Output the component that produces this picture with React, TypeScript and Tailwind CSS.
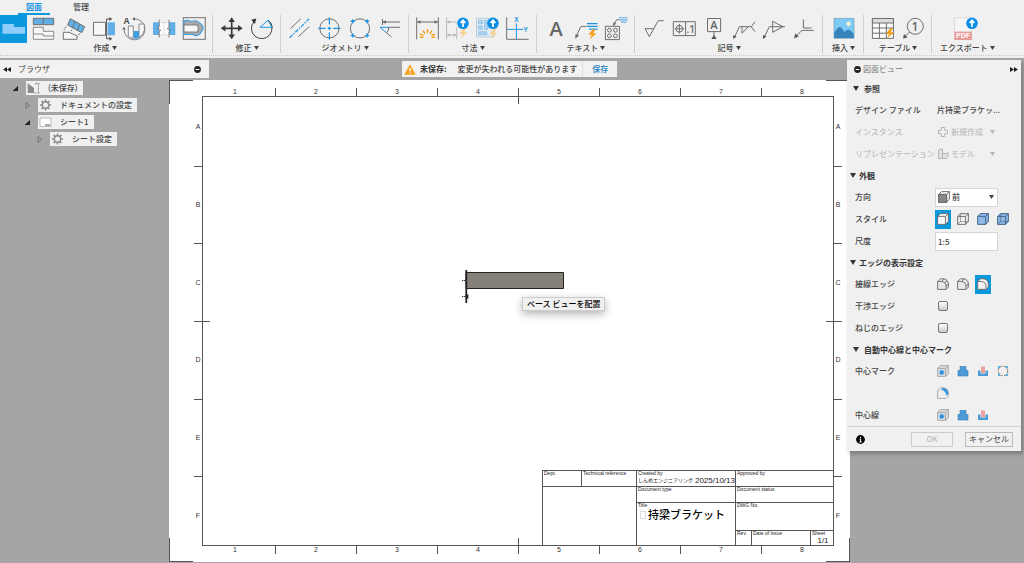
import { useState } from "react";
import type { ReactNode } from "react";
import { clsx } from "clsx";

type Tool = {
  name: string;
  icon: ReactNode;
  active?: boolean;
};

type ToolGroupData = {
  label: string;
  tools: Tool[];
};

const gray = "#6e6e6e";
const blue = "#1a94e0";
const sky = "#62aee6";
const orange = "#f7a11b";

function UploadBadge() {
  return (
    <>
      <circle cx="20" cy="8.3" fill="#0d8ee6" r="5.8" stroke="none" />
      <path d="M20 12V6M17.6 8L20 5.2L22.4 8" fill="none" stroke="#fff" strokeWidth="1.7" />
    </>
  );
}

function Bolt({ x, y, color = orange }: { x: number; y: number; color?: string }) {
  return <path d="M4 0L0 5.2H3.2L1 10L8 3.8H4.6L7 0Z" fill={color} stroke="none" transform={`translate(${x} ${y})`} />;
}

const groups: ToolGroupData[] = [
  {
    label: "作成",
    tools: [
      { name: "ベース ビュー", active: true, icon: <path d="M2.5 9H14V12H25V18.8H2.5Z" fill="#8fcdfb" stroke="none" /> },
      {
        name: "投影ビュー",
        icon: (
          <>
            <path d="M3.3 3.3H23.7V9.7H3.3ZM13.3 3.3V9.7" fill={sky} />
            <path d="M3.3 12.3H13.3V16.3H23.7V24.3H3.3ZM3.3 19H13.3V21H23.7" fill="#f7f7f7" stroke="#8a8a8a" />
          </>
        ),
      },
      {
        name: "補助ビュー",
        icon: (
          <>
            <path d="M10.3 3.7L24.7 11.7L21.7 17.7L7.7 10ZM15 6.5L12.6 12.6M20 9.3L17.3 15.2" fill={sky} />
            <path d="M6 11.5L4 15.3M12 14.5L10 17.3M19.5 18.5L17.5 21.5" strokeDasharray="2 1" />
            <path d="M3.3 17.3H9L17 21V24.3H3.3Z" fill="#fafafa" />
          </>
        ),
      },
      {
        name: "断面図",
        icon: (
          <>
            <path d="M3.5 7.3H15.5V20.3H3.5Z" fill="#f7f7f7" />
            <path d="M17.7 7.3H25V20.3H17.7Z" fill={sky} stroke="none" />
            <path d="M16.6 4V24M16.6 4H20M16.6 23.7H20" stroke="#555" />
            <path d="M19.3 2L22.3 4L19.3 6ZM19.3 21.7L22.3 23.7L19.3 25.7Z" fill="#555" stroke="none" />
          </>
        ),
      },
      {
        name: "詳細図",
        icon: (
          <>
            <path d="M13.5 3.9A10.5 10.5 0 1 1 4 14.5" stroke="#777" strokeWidth="0.9" />
            <path d="M12.2 3.9L15 2.3V5.5ZM4 11.8L2.4 14.6H5.6Z" fill="#555" stroke="none" />
            <path d="M8.3 11H13.3V23.4Q10.5 23 8.3 21Z" fill="#f7f7f7" strokeWidth="0.8" />
            <path d="M19 9H24.2L24.4 15Q23.5 20 19 22.5Z" fill="#f7f7f7" strokeWidth="0.8" />
            <path d="M13.6 16H19V22.8Q16.5 24 13.6 23.6Z" fill="#3d9ee2" stroke="none" />
            <text fill="#444" fontFamily="Liberation Sans" fontSize="8.5" fontWeight="700" stroke="none" x="3.5" y="9.4">A</text>
          </>
        ),
      },
      {
        name: "破断図",
        icon: (
          <>
            <path d="M3 7.3H9.2V20H3ZM19 7.3H25.3V20H19Z" fill={sky} stroke="none" />
            <path d="M9.2 7.3H19V20H9.2Z" fill="#fdfdfd" stroke="none" />
            <path d="M9.2 4.8V11.5L7.6 14L10.6 15L9.2 17V22.5M19 4.8V11.5L17.4 14L20.4 15L19 17V22.5" strokeWidth="0.9" />
            <path d="M9.5 7.5H19M9.5 19.8H19M14.1 7.5V20" stroke="#bbb" strokeDasharray="2 1" strokeWidth="0.6" />
          </>
        ),
      },
      {
        name: "部分断面図",
        icon: (
          <>
            <path d="M3.3 2.6H25.3V24.3H3.3Z" stroke="#8a8a8a" strokeWidth="1.3" />
            <path d="M4 6Q7 4.5 11 6.5Q17 4.5 19.5 8Q23.5 10 23 14.5Q21 17 20 19Q16 22 13 19.5H4Z" fill="#a9a9a9" stroke="#3d9ee2" strokeWidth="1.1" />
            <path d="M4 10H17.5Q19 13 17.5 17H4Z" fill="#f7f7f7" stroke="#777" strokeWidth="0.9" />
          </>
        ),
      },
    ],
  },
  {
    label: "修正",
    tools: [
      {
        name: "移動",
        icon: (
          <>
            <path d="M14.7 5V22M6 13.3H23" stroke="#3a3a3a" strokeWidth="1.7" />
            <path d="M14.7 2.3L18 7H11.4ZM14.7 24.3L18 19.6H11.4ZM3.7 13.3L8.4 10V16.6ZM25.7 13.3L21 10V16.6Z" fill="#3a3a3a" stroke="none" />
          </>
        ),
      },
      {
        name: "回転",
        icon: (
          <>
            <path d="M7 6.5A10.3 10.3 0 1 0 21 5.2Q25 8.5 25.3 12.5" stroke="#444" />
            <path d="M4.3 4.7L9.2 3.5L8 9Z" fill="#333" stroke="none" />
            <path d="M13 12.3L21 5.2L25 12.3Z" stroke={blue} />
          </>
        ),
      },
    ],
  },
  {
    label: "ジオメトリ",
    tools: [
      {
        name: "中心線",
        icon: (
          <>
            <path d="M5.5 13.6L15.8 3.8M13.3 21.7L24.3 11.5" />
            <path d="M4.7 22.7L24 4" stroke={blue} strokeDasharray="4 1.2 1.4 1.2" strokeWidth="1.2" />
          </>
        ),
      },
      {
        name: "中心マーク",
        icon: (
          <>
            <circle cx="14.4" cy="13.4" r="9.6" />
            <path d="M14.4 2.4V9.5M14.4 11.8V15M14.4 17.3V24.4M3.4 13.4H10.5M12.8 13.4H16M18.3 13.4H25.4" stroke={blue} strokeWidth="1.2" />
          </>
        ),
      },
      {
        name: "中心マーク パターン",
        icon: (
          <>
            <circle cx="15" cy="13.4" r="9.6" />
            <path d="M7.7 4.3V8.3M5.7 6.3H9.7M22.2 4.3V8.3M20.2 6.3H24.2M7.7 18.6V22.6M5.7 20.6H9.7M22.2 18.6V22.6M20.2 20.6H24.2" stroke={blue} strokeWidth="1.4" />
          </>
        ),
      },
      {
        name: "エッジ延長",
        icon: (
          <>
            <path d="M7.5 4V10M7.5 7H25M14 12.3H25M11 17.3L16.5 22M13.5 12.6Q14.5 15 11.8 17.6" />
            <path d="M7.5 7L11 5.3V8.7Z" fill={gray} stroke="none" />
            <path d="M11 17.3L5 12.3H14" stroke={blue} />
          </>
        ),
      },
    ],
  },
  {
    label: "寸法",
    tools: [
      {
        name: "寸法",
        icon: (
          <>
            <path d="M3.7 2.3V24.3M25.3 2.3V24.3M4 7H25" />
            <path d="M4 7L7.5 5.2V8.8ZM25 7L21.5 5.2V8.8Z" fill={gray} stroke="none" />
            <path d="M14.5 14V18M10 15.5L12 19M19 15.5L17 19M6.8 18.8L10.4 20.6M22.2 18.8L18.6 20.6M7 22.3H10.5M18.5 22.3H22" stroke={orange} strokeWidth="1.5" />
          </>
        ),
      },
      {
        name: "自動寸法",
        icon: (
          <>
            <path d="M3.6 2.3V24.3M13.8 12V24.3M4 7H14M4 20H13.5" stroke="#b9b9b9" />
            <path d="M4 7L7 5.4V8.6ZM4 20L7 18.4V21.6ZM13.5 20L10.5 18.4V21.6Z" fill="#b0b0b0" stroke="none" />
            <Bolt color="#f6cf93" x={16.5} y={13.5} />
            <UploadBadge />
          </>
        ),
      },
      {
        name: "自動図面",
        icon: (
          <>
            <path d="M3.5 3.3H21V22H3.5Z" fill="#e3edf4" stroke="#b7cddc" />
            <path d="M5.5 5.3H9.5V8.8H5.5ZM5.5 11H9.5V14.5H5.5ZM11.5 5.3H15V14.5H11.5ZM5.5 16.7H14V20H5.5Z" fill="#a7d2f1" stroke="#8ebfe2" strokeWidth="0.7" />
            <Bolt color="#f6cf93" x={16.5} y={14} />
            <UploadBadge />
          </>
        ),
      },
      {
        name: "座標寸法",
        icon: (
          <>
            <path d="M3.7 2.3V24.3H25.7" />
            <path d="M13.4 8.5V24M4 14.4H20.3" stroke={blue} />
            <g fill={blue} fontFamily="Liberation Sans" fontSize="6.5" fontWeight="700" stroke="none">
              <text x="11.2" y="7.3">X</text>
              <text x="20.6" y="16.6">Y</text>
            </g>
          </>
        ),
      },
    ],
  },
  {
    label: "テキスト",
    tools: [
      {
        name: "テキスト",
        icon: <text fill="#666" fontFamily="Open Sans" fontSize="20" fontWeight="600" stroke="none" textAnchor="middle" x="15" y="21.3">A</text>,
      },
      {
        name: "引出線",
        icon: (
          <>
            <path d="M5 22.3L9 13Q9.6 11.4 11.2 11.4H15.5" />
            <path d="M4.3 23.7L4.5 19L8.2 20.6Z" fill={gray} stroke="none" />
            <path d="M16 8.6H26.6M16 11.4H26.6M18 14.2H26.6" stroke={blue} strokeWidth="1.3" />
            <Bolt x={17.5} y={14.5} />
          </>
        ),
      },
      {
        name: "穴注記",
        icon: (
          <>
            <path d="M4.4 11.3H18.4V24.6H4.4Z" />
            <circle cx="8.4" cy="15.2" r="1.9" />
            <circle cx="14.4" cy="15.2" r="1.9" />
            <circle cx="8.4" cy="20.8" r="1.9" />
            <circle cx="14.4" cy="20.8" r="1.9" />
            <path d="M13 10L15 5.5Q15.6 4.6 18 4.6" />
            <path d="M12 11L12.3 7.3L15.3 8.8Z" fill={gray} stroke="none" />
            <path d="M18 2.7H26.6M18 4.9H26.6M20 7.1H25.6" stroke={sky} strokeWidth="1.1" />
          </>
        ),
      },
    ],
  },
  {
    label: "記号",
    tools: [
      { name: "表面粗さ", icon: <path d="M14.6 13.7H6L10.3 21.6L19.3 5.7H24.7" /> },
      {
        name: "幾何公差",
        icon: (
          <>
            <path d="M4.3 6.7H26.3V20.6H4.3ZM16.6 6.7V20.6M10.4 9V18.6M5.7 13.8H15.2" />
            <circle cx="10.4" cy="13.8" r="3.4" />
            <text fill={gray} fontFamily="Open Sans" fontSize="10" fontWeight="600" stroke="none" x="17.6" y="17.8">.1</text>
          </>
        ),
      },
      {
        name: "データム",
        icon: (
          <>
            <path d="M8.5 3.5H21.6V16.6H8.5ZM15 16.6V21" />
            <path d="M12.3 24L15 20L17.7 24Z" fill="#555" stroke="none" />
            <text fill="#666" fontFamily="Open Sans" fontSize="11" fontWeight="600" stroke="none" textAnchor="middle" x="15" y="14">A</text>
          </>
        ),
      },
      {
        name: "溶接記号",
        icon: (
          <>
            <path d="M5.3 22.7L10.3 11.7H22.3L26 6.7M22.3 11.7L26 16.7M13 11.7V18.3L19.3 11.7" />
            <path d="M4.3 24L4.2 20L7.6 21.4Z" fill="#555" stroke="none" />
          </>
        ),
      },
      {
        name: "テーパ",
        icon: (
          <>
            <path d="M5 22.7L10.3 11.7H26M13.7 6.3V17.3L24 11.7Z" />
            <path d="M4 24L4 20L7.4 21.4Z" fill="#555" stroke="none" />
          </>
        ),
      },
      {
        name: "曲げ記号",
        icon: (
          <>
            <path d="M6.3 21.7L13 15.4H24.7M14.4 4.3V13H22.6" />
            <path d="M5 23.2L6.3 18.5L9.8 21.6Z" fill="#555" stroke="none" />
          </>
        ),
      },
    ],
  },
  {
    label: "挿入",
    tools: [
      {
        name: "イメージ",
        icon: (
          <>
            <path d="M5 3.4H25V23.3H5Z" fill="#7fcbf8" stroke="#6a8ea5" strokeWidth="0.6" />
            <path d="M5.2 18Q8 12.5 10.5 12Q13 12.5 15.5 17Q17.5 14.3 19.5 14.5Q22 15 24.8 19V23H5.2Z" fill="#3784bd" stroke="none" />
            <circle cx="19.6" cy="8.8" fill="#f8f3c8" r="2.2" stroke="none" />
          </>
        ),
      },
    ],
  },
  {
    label: "テーブル",
    tools: [
      {
        name: "部品表",
        icon: (
          <>
            <path d="M4.4 3.5H25.4V23.4H4.4Z" fill="#fafafa" />
            <path d="M4.4 3.5H25.4V8H4.4Z" fill="#ddd" />
            <path d="M4.4 13H25.4M4.4 18.2H25.4M11.4 8V23.4M18.4 8V23.4" />
            <Bolt x={18} y={13.5} />
          </>
        ),
      },
      {
        name: "バルーン",
        icon: (
          <>
            <circle cx="17.3" cy="11.3" r="8" />
            <path d="M11.5 17L6.5 22" />
            <path d="M5 23.6L6 19L9.6 22.4Z" fill="#555" stroke="none" />
            <text fill="#666" fontFamily="Open Sans" fontSize="12" fontWeight="600" stroke="none" textAnchor="middle" x="17" y="15.6">1</text>
          </>
        ),
      },
    ],
  },
  {
    label: "エクスポート",
    tools: [
      {
        name: "PDF 出力",
        icon: (
          <>
            <path d="M2.5 2.8H19.5V24H2.5Z" fill="#f5f5f5" stroke="#dcdcdc" />
            <path d="M2.3 16.6H19.8V25H2.3Z" fill="#e89a98" stroke="none" />
            <text fill="#fff" fontFamily="Liberation Sans" fontSize="7" fontWeight="700" stroke="none" textAnchor="middle" x="11" y="23.4">PDF</text>
            <UploadBadge />
          </>
        ),
      },
    ],
  },
];

function ToolGroup({ group, first, last }: { group: ToolGroupData; first: boolean; last: boolean }) {
  return (
    <div
      className={clsx(
        "flex h-[38px] flex-col items-center border-[#cfcfcf]",
        first ? "pr-[2px]" : "pr-[3px] pl-1",
        last ? "ml-1" : "border-r",
        group.tools.length === 1 && "min-w-[41px]"
      )}
    >
      <div className="flex">
        {group.tools.map((tool) => (
          <button aria-label={tool.name} className="h-7 w-[30px]" key={tool.name} type="button">
            <svg
              className={clsx("h-7", tool.active ? "w-[27px] bg-[#0b98dc]" : "w-[30px]")}
              fill="none"
              stroke={gray}
              viewBox={tool.active ? "0 0 27 28" : "0 0 30 28"}
            >
              {tool.icon}
            </svg>
          </button>
        ))}
      </div>
      <button className="flex items-center gap-[2px] text-[8px] leading-[10px] font-medium whitespace-nowrap text-[#444]" type="button">
        {group.label}
        <Triangle />
      </button>
    </div>
  );
}

function Triangle({ className }: { className?: string }) {
  return (
    <svg className={clsx("h-1 w-[5px] shrink-0", className)} fill="currentColor" viewBox="0 0 5 4">
      <path d="M0 0H5L2.5 4Z" />
    </svg>
  );
}

function Toolbar() {
  return (
    <header className="h-[58px] shrink-0 bg-[#f0f0f0]">
      <nav className="flex h-[15px] gap-[15px] pl-[18px] text-[8px] leading-[12px]">
        <button className="w-8 border-b-2 border-[#0b98dc] font-bold text-[#1a94e0]" type="button">図面</button>
        <button className="w-8 border-b-2 border-transparent font-medium text-[#444]" type="button">管理</button>
      </nav>
      <div className="flex h-[41px] overflow-hidden border-b border-dotted border-[#ccc]">
        {groups.map((group, index) => (
          <ToolGroup first={index === 0} group={group} key={group.label} last={index === groups.length - 1} />
        ))}
      </div>
    </header>
  );
}

function MinusDot() {
  return (
    <svg className="size-[7px]" viewBox="0 0 7 7">
      <circle cx="3.5" cy="3.5" fill="#222" r="3.4" />
      <path d="M1.7 3.5H5.3" stroke="#fff" />
    </svg>
  );
}

type TreeItem = {
  label: string;
  icon: "document" | "gear" | "sheet";
  open: boolean;
  indent: string;
};

const tree: TreeItem[] = [
  { label: "(未保存)", icon: "document", open: true, indent: "pl-3" },
  { label: "ドキュメントの設定", icon: "gear", open: false, indent: "pl-6" },
  { label: "シート1", icon: "sheet", open: true, indent: "pl-6" },
  { label: "シート設定", icon: "gear", open: false, indent: "pl-9" },
];

function TreeIcon({ icon }: { icon: TreeItem["icon"] }) {
  if (icon === "gear") {
    return (
      <svg className="h-3 w-[13px]" fill="none" stroke="#8a8a8a" viewBox="0 0 13 12">
        <circle cx="6.5" cy="6" r="3.2" strokeWidth="1.4" />
        <path d="M6.5.4V2.4M6.5 9.6V11.6M.9 6H2.9M10.1 6H12.1M2.5 2L4 3.5M9 8.5L10.5 10M2.5 10L4 8.5M9 3.5L10.5 2" strokeWidth="1.6" />
      </svg>
    );
  }
  return (
    <svg className="h-3 w-[13px]" fill="none" viewBox="0 0 13 12">
      {icon === "document" ? (
        <>
          <path d="M1 1.5L7 6V11H1Z" fill="#8a8a8a" />
          <path d="M1 1.5V11M8 1.5H11.5V11H7M9 .5V3M11.5 1.5H13M11.5 11H13" stroke="#999" strokeWidth="0.8" />
        </>
      ) : (
        <>
          <path d="M1 2H12V10.5H1Z" fill="#fff" stroke="#aaa" strokeWidth="0.8" />
          <path d="M6 8H11V10H6Z" fill="#aaa" />
        </>
      )}
    </svg>
  );
}

function BrowserPanel() {
  return (
    <aside className="absolute top-[2px] left-0 w-[209px] text-[8px] text-[#444]">
      <div className="flex h-[18px] items-center bg-[#f2f2f2] pr-2 pl-[3px]">
        <DoubleArrow direction="left" />
        <h2 className="ml-[7px] flex-1">ブラウザ</h2>
        <button aria-label="折りたたむ" type="button"><MinusDot /></button>
      </div>
      <ul className="mt-[3px] flex flex-col gap-[3px]">
        {tree.map((item) => (
          <li className={clsx("flex h-[14px] items-center", item.indent)} key={item.label}>
            <svg className="mr-[7px] size-[7px]" fill="none" viewBox="0 0 7 7">
              {item.open ? <path d="M6 1V6H.5Z" fill="#222" /> : <path d="M2 .6L5.6 3.5L2 6.4Z" stroke="#666" strokeWidth="0.8" />}
            </svg>
            <button className="flex h-full items-center gap-2 bg-[#f0f0f0] pr-[5px] pl-px font-medium" type="button">
              <TreeIcon icon={item.icon} />
              {item.label}
            </button>
          </li>
        ))}
      </ul>
    </aside>
  );
}

function DoubleArrow({ direction }: { direction: "left" | "right" }) {
  return (
    <svg className={clsx("h-[5px] w-2", direction === "right" && "rotate-180")} fill="#222" viewBox="0 0 8 5">
      <path d="M4 0V5L0 2.5ZM8 0V5L4 2.5Z" />
    </svg>
  );
}

function SaveNotice() {
  return (
    <div className="absolute top-[3px] left-[402px] flex h-4 items-center bg-[#f2f2f2] text-[8px] whitespace-nowrap text-[#444]">
      <svg className="ml-[2px] h-[11px] w-3" viewBox="0 0 12 11">
        <path d="M6 .3L11.8 10.7H.2Z" fill="#f8a01c" />
        <path d="M6 4V7.4M6 8.4V9.6" stroke="#fff" strokeWidth="1.3" />
      </svg>
      <strong className="ml-1 text-[#333]">未保存:</strong>
      <span className="mr-[5px] ml-[11px] font-medium">変更が失われる可能性があります</span>
      <button className="h-full border-l border-[#ddd] px-[9px] font-medium text-[#1a7fc4]" type="button">保存</button>
    </div>
  );
}

const columns = ["1", "2", "3", "4", "5", "6", "7", "8"];
const rows = ["A", "B", "C", "D", "E", "F"];

function ColumnRuler({ className }: { className: string }) {
  return (
    <div className={clsx("col-span-3 col-start-1 flex", className)}>
      {columns.map((column) => (
        <span className="flex-1 border-l border-[#555] text-center first:border-transparent" key={column}>{column}</span>
      ))}
    </div>
  );
}

function RowRuler({ className }: { className: string }) {
  return (
    <div className={clsx("row-span-3 row-start-1 flex flex-col", className)}>
      {rows.map((row) => (
        <span className="flex flex-1 items-center justify-center border-t border-[#555] first:border-transparent" key={row}>{row}</span>
      ))}
    </div>
  );
}

function BlockCell({ label, className, children }: { label?: string; className?: string; children?: ReactNode }) {
  return (
    <div className={clsx("border-t border-l border-[#555] pl-px", className)}>
      <div className="text-[5px] leading-[5px] whitespace-nowrap">{label}</div>
      {children}
    </div>
  );
}

function TitleBlock() {
  return (
    <div className="grid grid-cols-[39px_55px_99px_16px_59px_24px] grid-rows-[16px_16px_28px_16px] text-[#222]">
      <BlockCell label="Dept." />
      <BlockCell label="Technical reference" />
      <BlockCell label="Created by">
        <div className="flex items-center justify-between leading-[9px] whitespace-nowrap">
          <span className="text-[5px]">しんめエンジニアリング</span>
          <span className="text-[8px]">2025/10/13</span>
        </div>
      </BlockCell>
      <BlockCell className="col-span-3" label="Approved by" />
      <BlockCell className="col-span-2 row-span-3" />
      <BlockCell label="Document type" />
      <BlockCell className="col-span-3" label="Document status" />
      <BlockCell className="row-span-2" label="Title">
        <div className="flex items-center gap-[2px] pl-[2px] text-[11px] leading-[14px] font-medium whitespace-nowrap text-black">
          <span className="h-2 w-[6px] border border-[#ddd]" />
          持梁ブラケット
        </div>
      </BlockCell>
      <BlockCell className="col-span-3" label="DWG No." />
      <BlockCell label="Rev." />
      <BlockCell label="Date of issue" />
      <BlockCell label="Sheet">
        <div className="text-center text-[8px] leading-[10px]">1/1</div>
      </BlockCell>
    </div>
  );
}

function Sheet() {
  return (
    <section className="relative mt-[22px] mr-[174px] mb-px ml-[169px] flex min-h-[482px] flex-1 bg-white pt-2 pr-2 pb-2 pl-[25px] font-['Liberation_Sans','Noto_Sans_CJK_JP',sans-serif]">
      <i className="absolute top-0 left-0 size-6 border-t border-l border-[#555]" />
      <i className="absolute top-0 right-0 size-6 border-t border-r border-[#555]" />
      <i className="absolute bottom-0 left-0 size-6 border-b border-l border-[#555]" />
      <i className="absolute right-0 bottom-0 size-6 border-r border-b border-[#555]" />
      <div className="grid flex-1 grid-cols-[8px_1fr_8px] grid-rows-[8px_1fr_8px] text-[7px] leading-2 text-[#333]">
        <ColumnRuler className="row-start-1" />
        <ColumnRuler className="row-start-3" />
        <RowRuler className="col-start-1" />
        <RowRuler className="col-start-3" />
        <div className="relative col-start-2 row-start-2 flex items-end justify-end outline -outline-offset-1 outline-[#555]">
          <i className="absolute top-0 left-1/2 h-2 border-l border-[#555]" />
          <i className="absolute bottom-0 left-1/2 h-2 border-l border-[#555]" />
          <i className="absolute top-1/2 left-0 w-2 border-t border-[#555]" />
          <i className="absolute top-1/2 right-0 w-2 border-t border-[#555]" />
          <svg className="absolute top-[173px] left-[258px] h-9 w-[106px]" viewBox="0 0 106 36">
            <path d="M6 3.5H103.5V19.5H6Z" fill="#858179" stroke="#222" />
            <path d="M6.3 1V34" stroke="#222" strokeWidth="1.8" />
            <path d="M2 11.5H3.4M4 11.5H5.4M2 27.5H3.4M4 27.5H5" stroke="#333" />
            <path d="M5.6 25.5H8.4V29.5H5.6Z" fill="#222" />
          </svg>
          <div
            className="absolute top-[201px] left-[320px] border border-[#ccc] bg-[#f0f0f0] px-1 font-['Noto_Sans_CJK_JP',sans-serif] text-[8px] leading-[12px] font-medium whitespace-nowrap text-black shadow-[0_3px_8px_rgba(0,0,0,0.3)]"
            role="tooltip"
          >
            ベース ビューを配置
          </div>
          <TitleBlock />
        </div>
      </div>
    </section>
  );
}

type CubeKind = "solid" | "wire" | "shaded" | "shadedEdges" | "round" | "roundEdge" | "roundOff" | "front";

const cubeFill: Record<CubeKind, string> = {
  solid: "#f7f7f7",
  wire: "none",
  shaded: "#8fb9e6",
  shadedEdges: "#8fb9e6",
  round: "#e8e8e8",
  roundEdge: "#e8e8e8",
  roundOff: "#f2f2f2",
  front: "#f4f4f4",
};

function Cube({ kind }: { kind: CubeKind }) {
  const line = kind === "shaded" || kind === "shadedEdges" ? "#3d5c85" : "#666";
  const rounded = kind === "round" || kind === "roundEdge" || kind === "roundOff";
  return (
    <svg className="size-3" fill={cubeFill[kind]} stroke={line} strokeLinejoin="round" strokeWidth="0.9" viewBox="0 0 12 12">
      {rounded ? (
        <>
          <path d="M.6 3.5L3.5.8H7Q11.4 2 11.4 6V9L9 11.4H.6Z" />
          <path d="M.6 3.5H4.5Q9 4 9 8V11.4" />
          {kind !== "roundOff" && <path d="M4.5 3.5L7 .8M9 8L11.4 6" />}
          {kind === "round" && <path d="M7.5 5L10 2.8" />}
        </>
      ) : (
        <>
          <path d="M.6 3.9Q.6 3.4 1 3L3 1Q3.4.6 4 .6H11.4V8.2L8.6 11.4H.6Z" />
          <path d="M.6 3.4H8.6V11.4M8.6 3.4L11.4.6" fill="none" />
          {kind === "front" && <path d="M.6 3.4H8.6V11.4H.6Z" fill="#888" />}
          {(kind === "wire" || kind === "shadedEdges") && <path d="M3.4.6V8.6H11.4M3.4 8.6L.6 11.4" fill="none" strokeWidth="0.6" />}
        </>
      )}
    </svg>
  );
}

function HoleIcon() {
  return (
    <svg className="size-3" stroke="#999" strokeWidth="0.8" viewBox="0 0 12 12">
      <path d="M.6 3.4L3.4.6H11.4V8.6L8.6 11.4H.6Z" fill="#ddd" />
      <path d="M.6 3.4H8.6V11.4M8.6 3.4L11.4.6" fill="none" />
      <circle cx="4.7" cy="7.4" fill="#2f8fdb" r="2.7" stroke="#cde4f5" />
    </svg>
  );
}

function BossIcon() {
  return (
    <svg className="size-3" viewBox="0 0 12 12">
      <path d="M3 1.5H9V5.5H11V11H1V5.5H3Z" fill="#4d9bd6" stroke="#347db5" strokeWidth="0.6" />
    </svg>
  );
}

function PocketIcon() {
  return (
    <svg className="size-3" viewBox="0 0 12 12">
      <path d="M1 5.5H3.5V8.5H8.5V5.5H11V11H1Z" fill="#4d9bd6" />
      <path d="M4 1.5H8V8H4Z" fill="#eba19e" />
    </svg>
  );
}

function PatternIcon() {
  return (
    <svg className="size-3" fill="none" viewBox="0 0 12 12">
      <circle cx="6" cy="6" r="4.8" stroke="#666" strokeDasharray="2.5 1.3" strokeWidth="0.9" />
      <path d="M1 2H3M2 1V3M9 2H11M10 1V3M1 10H3M2 9V11M9 10H11M10 9V11" stroke={blue} strokeWidth="0.9" />
    </svg>
  );
}

function FilletIcon() {
  return (
    <svg className="size-3" stroke="#999" strokeWidth="0.8" viewBox="0 0 12 12">
      <path d="M.6 3.5L3.5.8H7Q11.4 2 11.4 6V9L9 11.4H.6Z" fill="#eee" />
      <path d="M4 2.8L6 .8Q11.4 1.6 11.4 7L9 8.4Q9 4 4 2.8Z" fill="#3b98de" stroke="none" />
    </svg>
  );
}

function PanelSection({ title, wide, children }: { title: string; wide?: boolean; children: ReactNode }) {
  return (
    <section>
      <h3 className={clsx("flex h-[21px] items-center font-bold text-[#333]", wide ? "gap-[5px] pl-[6px]" : "gap-[3px] pl-[3px]")}>
        <Triangle className="h-[5px] w-[6px]" />
        {title}
      </h3>
      {children}
    </section>
  );
}

function PanelRow({ label, htmlFor, disabled, children }: { label: string; htmlFor?: string; disabled?: boolean; children: ReactNode }) {
  return (
    <div className={clsx("flex h-[22px] items-center pl-2", disabled ? "text-[#b5b5b5]" : "font-medium")}>
      <label className="w-20 shrink-0 whitespace-nowrap" htmlFor={htmlFor}>{label}</label>
      {children}
    </div>
  );
}

function IconChoices({ name, options, initial }: { name: string; options: ReactNode[]; initial?: number }) {
  const [selected, setSelected] = useState(initial);

  return (
    <div aria-label={name} className="flex gap-1" role="group">
      {options.map((option, index) => (
        <button
          aria-label={`${name} ${index + 1}`}
          aria-pressed={selected === index}
          className={clsx("flex h-[19px] w-4 items-center justify-center", selected === index && "bg-[#0b98dc]")}
          key={index}
          onClick={() => setSelected(index)}
          type="button"
        >
          {option}
        </button>
      ))}
    </div>
  );
}

function IconSelect({ id, value, icon, disabled }: { id: string; value: string; icon: ReactNode; disabled?: boolean }) {
  return (
    <div className={clsx("relative flex h-[19px] w-[63px] items-center", !disabled && "border border-[#d5d5d5] bg-white")}>
      <span className="absolute left-[2px]">{icon}</span>
      <select className="h-full w-full appearance-none pl-4 opacity-100" disabled={disabled} id={id}>
        <option>{value}</option>
      </select>
      <Triangle className="pointer-events-none absolute right-[3px]" />
    </div>
  );
}

function CheckRow({ id, label }: { id: string; label: string }) {
  return (
    <PanelRow htmlFor={id} label={label}>
      <input className="ml-[3px] size-[10px] appearance-none rounded-[2px] border border-[#777] bg-linear-to-b from-white to-[#ccc] checked:to-[#0b98dc]" id={id} type="checkbox" />
    </PanelRow>
  );
}

function DrawingViewPanel() {
  return (
    <aside className="absolute top-[2px] right-[3px] w-[174px] bg-[#f0f0f0] text-[8px] text-[#444] shadow-[2px_3px_4px_rgba(0,0,0,0.25)]">
      <div className="flex h-[18px] items-center gap-[2px] pr-[3px] pl-[7px]">
        <MinusDot />
        <h2 className="flex-1 text-[#777]">図面ビュー</h2>
        <DoubleArrow direction="right" />
      </div>
      <PanelSection title="参照" wide>
        <PanelRow label="デザイン ファイル">
          <span className="pl-[2px] whitespace-nowrap">片持梁ブラケッ...</span>
        </PanelRow>
        <PanelRow disabled htmlFor="instance" label="インスタンス">
          <IconSelect
            disabled
            icon={
              <svg className="size-3" fill="none" stroke="currentColor" viewBox="0 0 12 12">
                <path d="M4.3 1.5H7.7V4.3H10.5V7.7H7.7V10.5H4.3V7.7H1.5V4.3H4.3Z" />
              </svg>
            }
            id="instance"
            value="新規作成"
          />
        </PanelRow>
        <PanelRow disabled htmlFor="representation" label="リプレゼンテーション">
          <IconSelect
            disabled
            icon={
              <svg className="size-3" fill="#e2e2e2" stroke="currentColor" viewBox="0 0 12 12">
                <path d="M1.5 2L3 1H5.5V10.5H1.5ZM5.5 5.5H9.5L11 4.5V9L9.5 10.5H5.5Z" />
              </svg>
            }
            id="representation"
            value="モデル"
          />
        </PanelRow>
      </PanelSection>
      <PanelSection title="外観">
        <PanelRow htmlFor="orientation" label="方向">
          <IconSelect icon={<Cube kind="front" />} id="orientation" value="前" />
        </PanelRow>
        <PanelRow label="スタイル">
          <IconChoices
            initial={0}
            name="スタイル"
            options={[<Cube kind="solid" />, <Cube kind="wire" />, <Cube kind="shaded" />, <Cube kind="shadedEdges" />]}
          />
        </PanelRow>
        <PanelRow htmlFor="scale" label="尺度">
          <input className="h-[19px] w-[63px] border border-[#d5d5d5] bg-white pl-[2px]" defaultValue="1:5" id="scale" />
        </PanelRow>
      </PanelSection>
      <PanelSection title="エッジの表示設定">
        <PanelRow label="接線エッジ">
          <IconChoices initial={2} name="接線エッジ" options={[<Cube kind="round" />, <Cube kind="roundEdge" />, <Cube kind="roundOff" />]} />
        </PanelRow>
        <CheckRow id="interference" label="干渉エッジ" />
        <CheckRow id="thread" label="ねじのエッジ" />
      </PanelSection>
      <PanelSection title="自動中心線と中心マーク" wide>
        <PanelRow label="中心マーク">
          <IconChoices name="中心マーク" options={[<HoleIcon />, <BossIcon />, <PocketIcon />, <PatternIcon />]} />
        </PanelRow>
        <PanelRow label="">
          <IconChoices name="フィレット" options={[<FilletIcon />]} />
        </PanelRow>
        <PanelRow label="中心線">
          <IconChoices name="中心線" options={[<HoleIcon />, <BossIcon />, <PocketIcon />]} />
        </PanelRow>
      </PanelSection>
      <footer className="flex h-[25px] items-center border-t border-[#d2d2d2] pr-2 pl-[9px]">
        <svg className="mr-auto size-[9px]" viewBox="0 0 9 9">
          <circle cx="4.5" cy="4.5" r="4.4" />
          <path d="M4.5 1.7V3M3.5 4H4.6V7M3.3 7H5.8" fill="none" stroke="#fff" />
        </svg>
        <button className="h-[15px] w-[42px] border border-[#ccc] text-[#b5b5b5]" disabled type="button">OK</button>
        <button className="ml-3 h-[15px] w-12 border border-[#bbb] whitespace-nowrap" type="button">キャンセル</button>
      </footer>
    </aside>
  );
}

export default function App() {
  return (
    <div className="flex min-h-screen flex-col bg-[#a5a5a5] font-['Noto_Sans_CJK_JP',sans-serif] leading-none">
      <Toolbar />
      <main className="relative flex flex-1 flex-col">
        <Sheet />
        <BrowserPanel />
        <SaveNotice />
        <DrawingViewPanel />
      </main>
    </div>
  );
}
